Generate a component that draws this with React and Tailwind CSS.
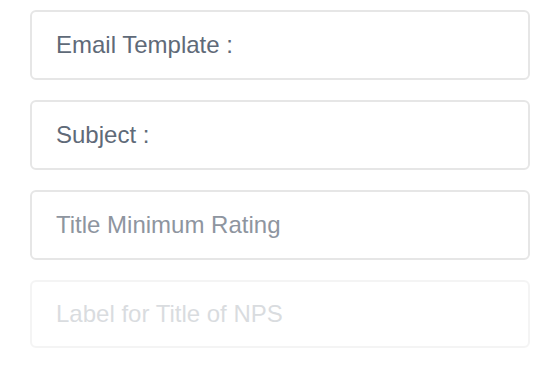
export default function App() {
  const fields = [
    { label: 'Email Template :', value: true },
    { label: 'Subject :', value: true },
    { label: 'Title Minimum Rating', value: false },
  ];

  return (
    <div
      className="w-[560px] h-[380px] bg-white overflow-hidden"
      style={{ fontFamily: "'Liberation Sans', Arial, sans-serif" }}
    >
      <div className="flex flex-col gap-[20px] pl-[30px] pt-[10px]">
        {fields.map((f) => (
          <div
            key={f.label}
            className="w-[500px] h-[70px] flex items-center px-[24px] rounded-[6px] border-2 border-[#e6e6e6] bg-white"
          >
            <span
              className={
                'text-[24px] leading-none ' +
                (f.value ? 'text-[#5f6a78]' : 'text-[#8e959f]')
              }
            >
              {f.label}
            </span>
          </div>
        ))}
        <div className="w-[500px] h-[68px] flex items-center px-[24px] rounded-[6px] border-2 border-[#e6e6e6] bg-white opacity-40">
          <span className="text-[24px] leading-none text-[#a3a9b1]">
            Label for Title of NPS
          </span>
        </div>
      </div>
    </div>
  );
}
